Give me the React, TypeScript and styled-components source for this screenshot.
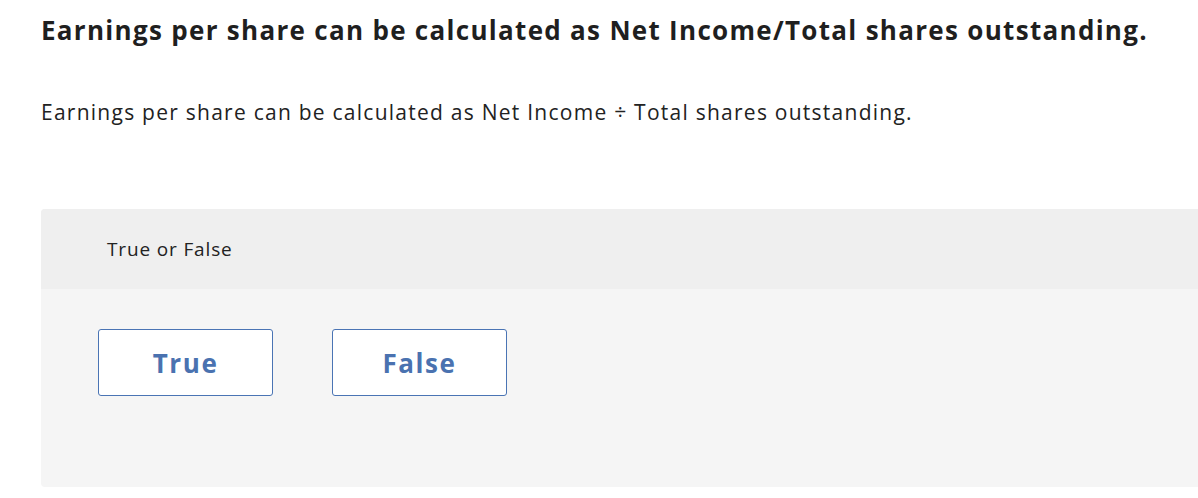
import * as React from "react";
import styled, { createGlobalStyle } from "styled-components";

const GlobalStyle = createGlobalStyle`
  html, body {
    margin: 0;
    padding: 0;
    background: #ffffff;
    font-family: "Open Sans", "Noto Sans", sans-serif;
    color: #222222;
  }
`;

const Page = styled.div`
  padding: 14px 0 0 41px;
  overflow: hidden;
`;

const Heading = styled.h1`
  margin: 0;
  font-size: 26px;
  font-weight: 700;
  line-height: 32px;
  letter-spacing: 1.3px;
  color: #1f1f1f;
  white-space: nowrap;
`;

const Prompt = styled.p`
  margin: 51px 0 0;
  font-size: 21px;
  line-height: 30px;
  letter-spacing: 1.25px;
  color: #222222;
  white-space: nowrap;
`;

const Panel = styled.section`
  margin-top: 82px;
  margin-right: -10px;
  border-radius: 4px 0 0 4px;
  overflow: hidden;
  background: #f5f5f5;
`;

const PanelHeader = styled.div`
  height: 80px;
  display: flex;
  align-items: center;
  padding-left: 66px;
  background: #efefef;
  font-size: 19px;
  letter-spacing: 0.85px;
  color: #222222;
`;

const Choices = styled.div`
  display: flex;
  gap: 59px;
  padding: 40px 0 91px 57px;
`;

const Choice = styled.button`
  width: 175px;
  height: 67px;
  padding: 0;
  border: 1px solid #4a74b4;
  border-radius: 3px;
  background: #ffffff;
  color: #4a72b0;
  font-family: "Open Sans", "Noto Sans", sans-serif;
  font-size: 26px;
  font-weight: 700;
  letter-spacing: 1.6px;
  cursor: pointer;
`;

const App: React.FunctionComponent = () => {
  return (
    <>
      <GlobalStyle />
      <Page>
        <Heading>
          Earnings per share can be calculated as Net Income/Total shares
          outstanding.
        </Heading>
        <Prompt>
          Earnings per share can be calculated as Net Income ÷ Total shares
          outstanding.
        </Prompt>
        <Panel>
          <PanelHeader>True or False</PanelHeader>
          <Choices>
            <Choice>True</Choice>
            <Choice>False</Choice>
          </Choices>
        </Panel>
      </Page>
    </>
  );
};

export default App;
